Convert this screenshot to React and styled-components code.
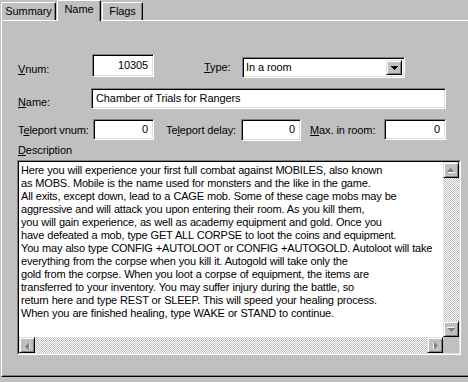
import React from "react";
import styled, { createGlobalStyle } from "styled-components";

const GlobalStyle = createGlobalStyle`
  html, body {
    margin: 0;
    padding: 0;
    background: #c0c0c0;
    overflow: hidden;
  }
  body {
    font-family: "Liberation Sans", Arial, sans-serif;
    font-size: 11px;
    letter-spacing: -0.1px;
    color: #000;
  }
`;

const description = [
  "Here you will experience your first full combat against MOBILES, also known",
  "as MOBS. Mobile is the name used for monsters and the like in the game.",
  "All exits, except down, lead to a CAGE mob. Some of these cage mobs may be",
  "aggressive and will attack you upon entering their room. As you kill them,",
  "you will gain experience, as well as academy equipment and gold. Once you",
  "have defeated a mob, type GET ALL CORPSE to loot the coins and equipment.",
  "You may also type CONFIG +AUTOLOOT or CONFIG +AUTOGOLD. Autoloot will take",
  "everything from the corpse when you kill it. Autogold will take only the",
  "gold from the corpse. When you loot a corpse of equipment, the items are",
  "transferred to your inventory. You may suffer injury during the battle, so",
  "return here and type REST or SLEEP. This will speed your healing process.",
  "When you are finished healing, type WAKE or STAND to continue.",
];

const Arrow = ({ dir = "down", color = "#000", shadow }) => {
  const rot = { up: 0, right: 90, down: 180, left: 270 }[dir];
  const d = "M3 0h1v1h1v1h1v1h1v1H0V3h1V2h1V1h1z";
  return (
    <svg
      width="8"
      height="5"
      viewBox="0 0 8 5"
      shapeRendering="crispEdges"
      style={{ transform: `rotate(${rot}deg)` }}
    >
      {shadow && <path d={d} fill={shadow} transform="translate(1 1)" />}
      <path d={d} fill={color} />
    </svg>
  );
};

const ScrollArrow = ({ dir }) => (
  <ScrollButton>
    <Arrow dir={dir} color="#808080" shadow="#fff" />
  </ScrollButton>
);

export default function App() {
  return (
    <>
      <GlobalStyle />
      <Window>
        <TabStrip>
          <Tab $w={55}>Summary</Tab>
          <Tab $w={44} $active>
            Name
          </Tab>
          <Tab $w={41}>Flags</Tab>
        </TabStrip>
        <Panel>
          <Form>
            <Row>
              <Label $w={74} $top={9}>
                <u>V</u>num:
              </Label>
              <Field $w={62} $h={23} $align="flex-end">
                10305
              </Field>
              <Label $w={38} $top={7} $ml={50}>
                <u>T</u>ype:
              </Label>
              <Select>
                <SelectText>In a room</SelectText>
                <SelectButton>
                  <Arrow dir="down" />
                </SelectButton>
              </Select>
            </Row>
            <Row>
              <Label $w={73} $top={8}>
                <u>N</u>ame:
              </Label>
              <Field $w={355} $h={21}>
                Chamber of Trials for Rangers
              </Field>
            </Row>
            <Row>
              <Label $w={75} $top={5}>
                T<u>e</u>leport vnum:
              </Label>
              <Field $w={61} $h={21} $align="flex-end">
                0
              </Field>
              <Label $w={75} $top={5} $ml={12}>
                Te<u>l</u>eport delay:
              </Label>
              <Field $w={60} $h={22} $align="flex-end">
                0
              </Field>
              <Label $w={74} $top={5} $ml={9}>
                <u>M</u>ax. in room:
              </Label>
              <Field $w={62} $h={21} $align="flex-end">
                0
              </Field>
            </Row>
            <Caption>
              <u>D</u>escription
            </Caption>
            <TextFrame>
              <TextGrid>
                <TextBody>{description.join("\n")}</TextBody>
                <VScroll>
                  <ScrollArrow dir="up" />
                  <Track />
                  <ScrollArrow dir="down" />
                </VScroll>
                <HScroll>
                  <ScrollArrow dir="left" />
                  <Track />
                  <ScrollArrow dir="right" />
                </HScroll>
                <Corner />
              </TextGrid>
            </TextFrame>
          </Form>
        </Panel>
      </Window>
    </>
  );
}

const Window = styled.div`
  width: 468px;
  height: 382px;
  padding-left: 1px;
  box-sizing: border-box;
  overflow: hidden;
  background: #c0c0c0;
`;

const TabStrip = styled.div`
  display: flex;
  align-items: flex-end;
  height: 20px;
  position: relative;
  z-index: 1;
`;

const Tab = styled.div`
  box-sizing: border-box;
  width: ${(p) => p.$w}px;
  height: ${(p) => (p.$active ? 21 : 18)}px;
  margin-left: ${(p) => (p.$active ? 1 : 0)}px;
  margin-right: ${(p) => (p.$active ? 1 : 0)}px;
  margin-bottom: ${(p) => (p.$active ? -1 : 0)}px;
  padding-bottom: ${(p) => (p.$active ? 3 : 0)}px;
  display: flex;
  align-items: center;
  justify-content: center;
  background: #c0c0c0;
  border-top: 1px solid #fff;
  border-left: 1px solid #fff;
  border-right: 1px solid #000;
  border-top-left-radius: 2px;
  border-top-right-radius: 2px;
  box-shadow: inset -1px 0 #808080;
  line-height: 13px;
`;

const Panel = styled.div`
  box-sizing: border-box;
  width: 480px;
  height: 357px;
  border-top: 1px solid #fff;
  border-left: 1px solid #fff;
  border-bottom: 1px solid #000;
  box-shadow: inset 0 -1px #808080;
  padding: 33px 0 0 16px;
`;

const Form = styled.div`
  display: flex;
  flex-direction: column;
  gap: 10px;
`;

const Row = styled.div`
  display: flex;
  align-items: flex-start;
`;

const Label = styled.div`
  box-sizing: border-box;
  width: ${(p) => p.$w}px;
  margin-left: ${(p) => p.$ml || 0}px;
  padding-top: ${(p) => p.$top}px;
  line-height: 13px;
  white-space: nowrap;
  u {
    text-decoration-thickness: 1px;
    text-underline-offset: 1px;
  }
`;

const sunken = `
  box-sizing: border-box;
  border: 1px solid;
  border-color: #808080 #fff #fff #808080;
  box-shadow: inset 1px 1px #000, inset -1px -1px #dfdfdf;
`;

const Field = styled.div`
  ${sunken}
  width: ${(p) => p.$w}px;
  height: ${(p) => p.$h}px;
  background: #fff;
  display: flex;
  align-items: center;
  justify-content: ${(p) => p.$align || "flex-start"};
  padding: 0 5px 1px 4px;
  line-height: 13px;
  white-space: nowrap;
`;

const Select = styled.div`
  ${sunken}
  width: 163px;
  height: 21px;
  margin-top: 3px;
  background: #fff;
  display: flex;
  padding: 2px;
`;

const SelectText = styled.div`
  flex: 1;
  padding-left: 1px;
  line-height: 15px;
`;

const raised = `
  box-sizing: border-box;
  background: #c0c0c0;
  border: 1px solid;
  border-color: #dfdfdf #000 #000 #dfdfdf;
  box-shadow: inset 1px 1px #fff, inset -1px -1px #808080;
  display: flex;
  align-items: center;
  justify-content: center;
`;

const SelectButton = styled.div`
  ${raised}
  width: 16px;
  height: 100%;
`;

const Caption = styled.div`
  line-height: 13px;
  margin-top: -7px;
`;

const TextFrame = styled.div`
  box-sizing: border-box;
  width: 444px;
  height: 195px;
  margin: -7px 0 0 -1px;
  border: 1px solid;
  border-color: #808080 #fff #fff #808080;
`;

const TextGrid = styled.div`
  box-sizing: border-box;
  height: 100%;
  border: 1px solid;
  border-color: #000 #dfdfdf #dfdfdf #000;
  background: #fff;
  display: grid;
  grid-template-columns: 1fr 16px;
  grid-template-rows: 1fr 16px;
`;

const TextBody = styled.div`
  padding: 2px 2px 0;
  line-height: 13px;
  letter-spacing: -0.2px;
  word-spacing: 0.3px;
  white-space: pre;
  overflow: hidden;
`;

const VScroll = styled.div`
  display: flex;
  flex-direction: column;
`;

const HScroll = styled.div`
  display: flex;
`;

const Track = styled.div`
  flex: 1;
  background: repeating-conic-gradient(#c0c0c0 0% 25%, #fff 0% 50%) 0 0 / 2px 2px;
`;

const ScrollButton = styled.div`
  ${raised}
  width: 16px;
  height: 16px;
  flex-shrink: 0;
`;

const Corner = styled.div`
  background: #c0c0c0;
`;
